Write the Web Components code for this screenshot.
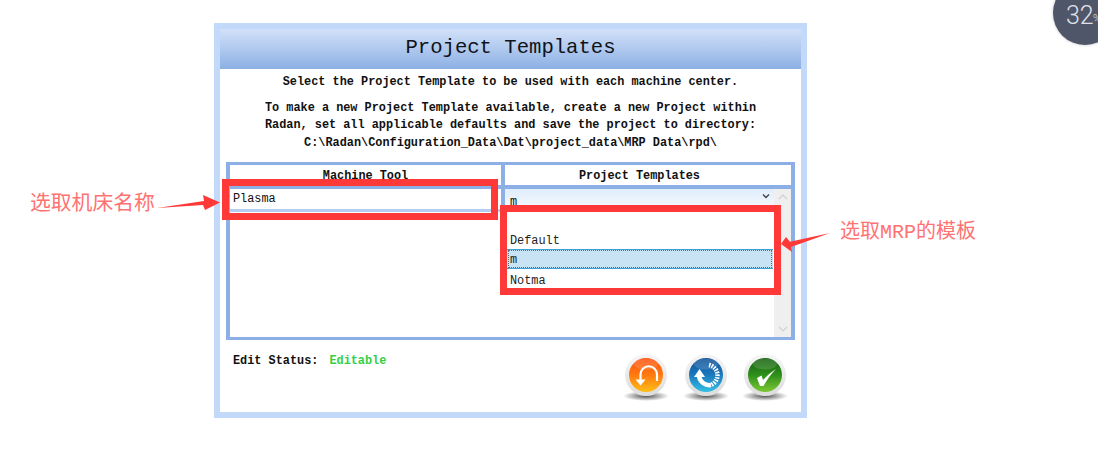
<!DOCTYPE html>
<html>
<head>
<meta charset="utf-8">
<title>Project Templates</title>
<style>
  html, body { margin: 0; padding: 0; background: #fff; overflow: hidden; }
  body { width: 1098px; height: 456px; font-family: "Liberation Mono", monospace; }
</style>
</head>
<body>
<doc-page>
  <template-window slot="window"></template-window>
  <red-box style="left:222px;top:179px;width:262px;height:27px"></red-box>
  <red-box style="left:500px;top:205px;width:267px;height:76px"></red-box>
  <call-out style="left:30px;top:190px;font-size:20.8px" tip="left">选取机床名称</call-out>
  <call-out style="left:840px;top:218px;font-size:20px" tip="right">选取MRP的模板</call-out>
  <zoom-badge value="32"></zoom-badge>
</doc-page>

<script>
const mono = '"Liberation Mono", "DejaVu Sans Mono", monospace';

class DocPage extends HTMLElement {
  constructor() {
    super();
    this.attachShadow({ mode: 'open' });
    this.shadowRoot.innerHTML = `
      <style>
        :host { display: block; position: relative; width: 1098px; height: 456px; overflow: hidden; }
        .wrap { display: flex; padding: 23px 0 0 214px; }
      </style>
      <div class="wrap"><slot name="window"></slot></div>
      <slot></slot>`;
  }
}

class TemplateWindow extends HTMLElement {
  constructor() {
    super();
    this.attachShadow({ mode: 'open' });
    this.shadowRoot.innerHTML = `
      <style>
        :host { display: block; width: 581px; height: 383px; border: 6px solid #c2d9fa; background: #fff;
                font-family: ${mono}; color: #111; display: flex; flex-direction: column; }
        h1 { margin: 0; height: 40px; line-height: 37px; text-align: center; font-size: 20.6px; font-weight: normal;
             background: linear-gradient(#d2e1f8, #8cb0e4); color: #10131a; }
        .intro { margin: 0; padding-top: 5px; height: 93px; box-sizing: border-box; text-align: center;
                 font-size: 11.87px; font-weight: bold; line-height: 17.5px; }
        .intro p { margin: 0 0 8px; }
        .foot { display: flex; justify-content: space-between; padding: 13px 15px 0 13px; }
        .status { font-size: 11.87px; font-weight: bold; line-height: 16px; }
        .status b { color: #35cf45; margin-left: 11px; }
        .btns { display: flex; gap: 17.5px; margin-top: 1px; }
      </style>
      <h1>Project Templates</h1>
      <div class="intro">
        <p>Select the Project Template to be used with each machine center.</p>
        <p>To make a new Project Template available, create a new Project within<br>
        Radan, set all applicable defaults and save the project to directory:<br>
        C:\\Radan\\Configuration_Data\\Dat\\project_data\\MRP Data\\rpd\\</p>
      </div>
      <mapping-table></mapping-table>
      <div class="foot">
        <div class="status">Edit Status:<b>Editable</b></div>
        <div class="btns">
          <glossy-button kind="undo"></glossy-button>
          <glossy-button kind="refresh"></glossy-button>
          <glossy-button kind="ok"></glossy-button>
        </div>
      </div>`;
  }
}

class MappingTable extends HTMLElement {
  constructor() {
    super();
    this.attachShadow({ mode: 'open' });
    this.shadowRoot.innerHTML = `
      <style>
        :host { display: block; margin: 0 6px 0 6px; width: 569px; box-sizing: border-box; height: 178px;
                border: 4px solid #8cb0e6; border-top-width: 3px; border-bottom-width: 3px; background: #fff; }
        .grid { display: grid; grid-template-columns: 271px 4px 1fr; grid-template-rows: 20px 4px 1fr; height: 100%; }
        .th { text-align: center; font-size: 11.87px; font-weight: bold; line-height: 22px; color: #111; }
        .th.pt { padding-right: 17px; }
        .vline { background: #8cb0e6; grid-row: 1 / 3; grid-column: 2; }
        .vstub { background: #8cb0e6; grid-row: 3; grid-column: 2; height: 23px; }
        .hline { background: #8cb0e6; }
        .hl { grid-row: 2; grid-column: 1; }
        .hr { grid-row: 2; grid-column: 3; }
        .left { grid-row: 3; grid-column: 1; }
        .row { height: 20px; line-height: 21px; padding-left: 3px; font-size: 11.87px; border-bottom: 3px solid #b4cdf0; }
        .right { grid-row: 3; grid-column: 3; position: relative; display: flex; }
        .combo { flex: 1; height: 100%; position: relative; font-size: 11.87px; }
        .value { height: 17px; line-height: 27px; padding-left: 5px; background: linear-gradient(#dfedfb, #f3f8fe); }
        .chev { position: absolute; right: 4px; top: 4px; }
        .bar { width: 17px; background: #efefef; display: flex; flex-direction: column; justify-content: space-between; padding: 5px 0; box-sizing: border-box; align-items: center; }
        .menu { position: absolute; left: 2px; top: 23px; right: 1px; height: 76px; background: #fff; padding-top: 17px;
                box-sizing: border-box; font-size: 11.87px; color: #222; }
        .opt { height: 20px; line-height: 25px; padding-left: 3px; box-sizing: border-box; }
        .sel { background: #c8e4f4; border-top: 1px solid #3ba3da; border-bottom: 1px solid #3ba3da; outline: 1px dotted #667; outline-offset: -2px; line-height: 20px; }
      </style>
      <div class="grid">
        <div class="th">Machine Tool</div>
        <div class="vline"></div>
        <div class="vstub"></div>
        <div class="th pt">Project Templates</div>
        <div class="hline hl"></div>
        <div class="hline hr"></div>
        <div class="left"><div class="row">Plasma</div></div>
        <div class="right">
          <div class="combo">
            <div class="value">m</div>
            <svg class="chev" width="8" height="6" viewBox="0 0 8 6"><path d="M1 1.5 L4 4.5 L7 1.5" fill="none" stroke="#444" stroke-width="1.4"/></svg>
            <div class="menu">
              <div class="opt">Default</div>
              <div class="opt sel">m</div>
              <div class="opt">Notma</div>
            </div>
          </div>
          <div class="bar">
            <svg width="10" height="6" viewBox="0 0 10 6"><path d="M1 5 L5 1 L9 5" fill="none" stroke="#d0d0d0" stroke-width="1.2"/></svg>
            <svg width="10" height="6" viewBox="0 0 10 6"><path d="M1 1 L5 5 L9 1" fill="none" stroke="#d0d0d0" stroke-width="1.2"/></svg>
          </div>
        </div>
      </div>`;
  }
}

const glossy = {
  undo: {
    stops: ['#ff4f0c', '#ff7a10', '#ffbe18'],
    mark: `<path d="M15.5 27 V20.5 a8.25 8.25 0 0 1 16.5 0 V27" fill="none" stroke="#fff" stroke-width="2.2"/>
           <path d="M10.5 25.5 H20.5 L15.5 31.5 Z" fill="#fff"/>`
  },
  refresh: {
    stops: ['#0f4f96', '#1c79bd', '#35c0e6'],
    mark: `<path d="M24 11 A10.5 10.5 0 0 1 26 31" fill="none" stroke="#fff" stroke-width="4.5" stroke-dasharray="1.6 1.1"/>
           <path d="M26 31 A10.5 10.5 0 0 1 14 22" fill="none" stroke="#fff" stroke-width="4.5"/>
           <path d="M9 23 L14.5 15 L20 23 Z" fill="#fff"/>`
  },
  ok: {
    stops: ['#14600f', '#2f8f1c', '#7cc832'],
    mark: `<path d="M13 24 L17.5 21.5 L19 26 Q24 20 32 15 Q25 22 19.5 32 H16 Z" fill="#fff"/>`
  }
};

class GlossyButton extends HTMLElement {
  constructor() {
    super();
    this.attachShadow({ mode: 'open' });
  }
  connectedCallback() {
    const g = glossy[this.getAttribute('kind')];
    this.shadowRoot.innerHTML = `
      <style>:host { display: block; width: 42px; height: 48px; } svg { display: block; overflow: visible; }</style>
      <svg width="42" height="48" viewBox="0 0 42 48">
        <defs>
          <linearGradient id="ball" x1="0" y1="0" x2="0" y2="1">
            <stop offset="0" stop-color="${g.stops[0]}"/>
            <stop offset=".5" stop-color="${g.stops[1]}"/>
            <stop offset="1" stop-color="${g.stops[2]}"/>
          </linearGradient>
          <linearGradient id="ring" x1="0" y1="0" x2="0" y2="1">
            <stop offset="0" stop-color="#f6f6f6"/>
            <stop offset="1" stop-color="#dcdcdc"/>
          </linearGradient>
          <radialGradient id="shade">
            <stop offset="0" stop-color="#333" stop-opacity=".85"/>
            <stop offset="1" stop-color="#333" stop-opacity="0"/>
          </radialGradient>
        </defs>
        <ellipse cx="21" cy="42" rx="23" ry="5" fill="url(#shade)"/>
        <circle cx="21" cy="21" r="21" fill="url(#ring)"/>
        <circle cx="21" cy="21" r="17" fill="url(#ball)"/>
        ${g.mark}
        <ellipse cx="21" cy="10" rx="12" ry="5.5" fill="#fff" opacity=".14"/>
      </svg>`;
  }
}

class RedBox extends HTMLElement {
  constructor() {
    super();
    this.attachShadow({ mode: 'open' });
    this.shadowRoot.innerHTML = `
      <style>:host { display: block; position: absolute; border: 7px solid #ff3838; }</style>`;
  }
}

class CallOut extends HTMLElement {
  constructor() {
    super();
    this.attachShadow({ mode: 'open' });
  }
  connectedCallback() {
    const left = this.getAttribute('tip') === 'left';
    const arrow = left
      ? `<svg class="a" style="left:127px;top:2px" width="66" height="26" viewBox="0 0 66 26"><path d="M0 16 L47 9 L46 3 L63 10.5 L48 18 L46 13 Z" fill="#ff3838"/></svg>`
      : `<svg class="a" style="left:-61px;top:1px" width="56" height="34" viewBox="0 0 56 34"><path d="M51 14 L11 22.7 L7 18 L2 25 L13 33 L12 28 Z" fill="#ff3838"/></svg>`;
    this.shadowRoot.innerHTML = `
      <style>
        :host { display: block; position: absolute; height: 29px; line-height: 29px; white-space: nowrap;
                font-family: "Liberation Mono", "Noto Sans CJK SC", monospace; color: #ff7272; }
        .a { position: absolute; }
      </style>
      <span><slot></slot></span>${arrow}`;
  }
}

class ZoomBadge extends HTMLElement {
  constructor() {
    super();
    this.attachShadow({ mode: 'open' });
  }
  connectedCallback() {
    this.shadowRoot.innerHTML = `
      <style>
        :host { display: block; position: absolute; left: 1053px; top: -19px; width: 64px; height: 64px; border-radius: 50%;
                background: #505669; box-shadow: 0 0 3px rgba(0,0,0,.25); color: #dfe1e8; font-family: Roboto, sans-serif; font-weight: 300; }
        .n { position: absolute; left: 13px; top: 20px; font-size: 25px; line-height: 30px; }
        .p { position: absolute; left: 40px; top: 31px; font-size: 11px; line-height: 14px; }
      </style>
      <span class="n">${this.getAttribute('value')}</span><span class="p">%</span>`;
  }
}

customElements.define('doc-page', DocPage);
customElements.define('template-window', TemplateWindow);
customElements.define('mapping-table', MappingTable);
customElements.define('glossy-button', GlossyButton);
customElements.define('red-box', RedBox);
customElements.define('call-out', CallOut);
customElements.define('zoom-badge', ZoomBadge);
</script>
</body>
</html>
